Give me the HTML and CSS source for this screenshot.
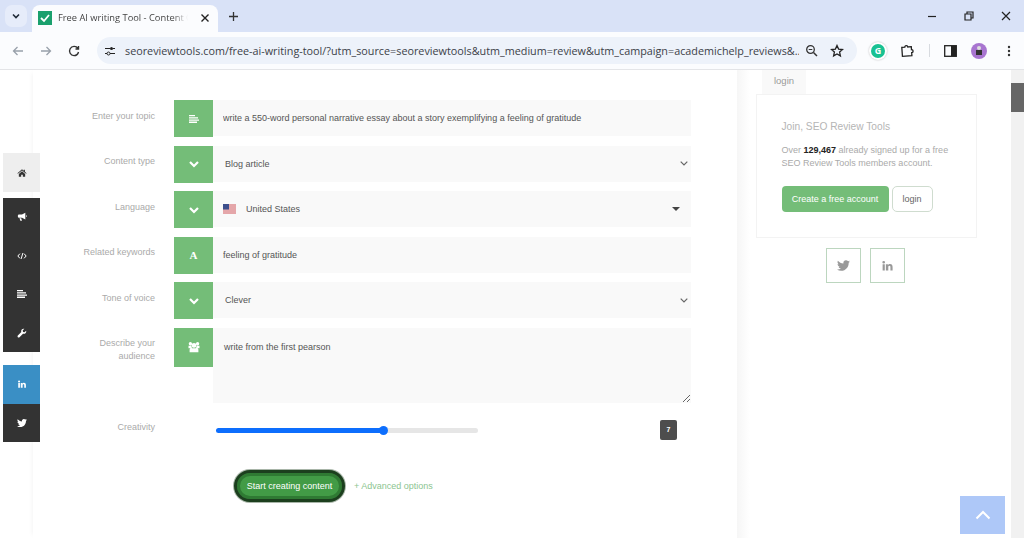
FILE: index.html
```html
<!DOCTYPE html>
<html lang="en">
<head>
<meta charset="utf-8">
<title>Free AI writing Tool - Content Creator</title>
<link rel="stylesheet" href="styles.css">
</head>
<body>
<svg class="defs" width="0" height="0" aria-hidden="true">
  <symbol id="i-lines" viewBox="0 0 10 8"><path d="M0 0h6v1.300H0zM0 2.200h9v1.300H0zM0 4.400h10v1.300H0zM0 6.600h8V8H0z" fill="currentColor"/></symbol>
  <symbol id="i-chev" viewBox="0 0 12 12"><path d="M2 4l4 4 4-4" fill="none" stroke="currentColor" stroke-width="2.2"/></symbol>
  <symbol id="i-users" viewBox="0 0 12 12"><path d="M2.400 1a1.700 1.700 0 110 3.400 1.700 1.700 0 010-3.400zM9.600 1a1.700 1.700 0 110 3.400 1.700 1.700 0 010-3.400zM6 2a2.400 2.400 0 110 4.800A2.400 2.400 0 016 2zM.5 4.800h2.800L4 7.200H.5zM8.700 4.800h2.800v2.400H8zM3 7.200h6c.8 0 1.400.7 1.400 1.500v2.600H1.600V8.700c0-.8.600-1.500 1.400-1.500z" fill="currentColor"/></symbol>
  <symbol id="i-home" viewBox="0 0 12 12"><path d="M6 1.500L.5 6.300l.6.7L6 2.900 10.900 7l.6-.7-2-1.700V2H8v1.400zM2.200 7.200L6 4l3.800 3.200v3.300H7V8H5v2.500H2.200z" fill="currentColor"/></symbol>
  <symbol id="i-horn" viewBox="0 0 12 12"><path d="M10 1v8L6 7H2.500C1.500 7 1 6.200 1 5.200V4.800C1 3.800 1.500 3 2.500 3H6zM3 7.500h2l1 3H4zM10.800 4h.7v2h-.7z" fill="currentColor"/></symbol>
  <symbol id="i-code" viewBox="0 0 12 12"><path d="M3.500 3.200L1 6l2.500 2.800M8.500 3.200L11 6 8.500 8.800M7 2.500L5 9.500" fill="none" stroke="currentColor" stroke-width="1.200"/></symbol>
  <symbol id="i-wrench" viewBox="0 0 12 12"><path d="M11 3.200L9 5.200 7.300 4.700 6.800 3 8.800 1C7.200.5 5.300 1.400 5 3.200c-.1.600 0 1.200.2 1.600L1 9c-.6.600-.6 1.400 0 2s1.400.6 2 0l4.200-4.200c1.900.7 4.500-.8 3.800-3.600z" fill="currentColor"/></symbol>
  <symbol id="i-in" viewBox="0 0 24 24"><path d="M4.980 3.500a2.500 2.500 0 11-.02 5 2.500 2.500 0 01.02-5zM3 9.500h4V21H3zM9 9.500h3.800v1.700h.05c.53-1 1.830-2.050 3.770-2.050 4.030 0 4.780 2.650 4.780 6.100V21h-4v-5.500c0-1.300-.02-3-1.830-3s-2.100 1.430-2.100 2.900V21H9z" fill="currentColor"/></symbol>
  <symbol id="i-tw" viewBox="0 0 24 24"><path d="M23.953 4.570a10 10 0 01-2.825.775 4.958 4.958 0 002.163-2.723c-.951.555-2.005.959-3.127 1.184a4.920 4.920 0 00-8.384 4.482C7.690 8.095 4.067 6.130 1.640 3.162a4.822 4.822 0 00-.666 2.475c0 1.710.870 3.213 2.188 4.096a4.904 4.904 0 01-2.228-.616v.060a4.923 4.923 0 003.946 4.827 4.996 4.996 0 01-2.212.085 4.936 4.936 0 004.604 3.417 9.867 9.867 0 01-6.102 2.105c-.390 0-.779-.023-1.170-.067a13.995 13.995 0 007.557 2.209c9.053 0 13.998-7.496 13.998-13.985 0-.210 0-.420-.015-.630A9.935 9.935 0 0024 4.590z" fill="currentColor"/></symbol>
</svg>

<header class="chrome">
  <div class="tabstrip">
    <button class="tab-list" aria-label="Search tabs"><svg width="10" height="10" viewBox="0 0 10 10"><path d="M2 3.500l3 3 3-3" fill="none" stroke="#1f2937" stroke-width="1.600"/></svg></button>
    <div class="tab">
      <svg class="favicon" width="14" height="14" viewBox="0 0 14 14"><rect width="14" height="14" fill="#1aa06d"/><path d="M3 7l3 3 5-6" fill="none" stroke="#fff" stroke-width="1.800"/></svg>
      <span class="tab-title">Free AI writing Tool - Content Creator</span>
      <svg width="10" height="10" viewBox="0 0 10 10"><path d="M1.500 1.500l7 7M8.500 1.500l-7 7" stroke="#222" stroke-width="1.400"/></svg>
    </div>
    <svg class="newtab" width="11" height="11" viewBox="0 0 11 11"><path d="M5.500 1v9M1 5.500h9" stroke="#333" stroke-width="1.300"/></svg>
    <div class="winctl">
      <svg width="10" height="10" viewBox="0 0 10 10"><path d="M1 5.500h8" stroke="#222" stroke-width="1.200"/></svg>
      <svg width="10" height="10" viewBox="0 0 10 10"><path d="M1 3h6v6H1zM3 3V1h6v6H7" fill="none" stroke="#222" stroke-width="1.200"/></svg>
      <svg width="10" height="10" viewBox="0 0 10 10"><path d="M1 1l8 8M9 1L1 9" stroke="#222" stroke-width="1.200"/></svg>
    </div>
  </div>
  <div class="toolbar">
    <svg class="nav-btn" width="12" height="12" viewBox="0 0 12 12"><path d="M11 6H1.500M5.500 2l-4 4 4 4" fill="none" stroke="#98a0aa" stroke-width="1.300"/></svg>
    <svg class="nav-btn" width="12" height="12" viewBox="0 0 12 12"><path d="M1 6h9.500M6.500 2l4 4-4 4" fill="none" stroke="#98a0aa" stroke-width="1.300"/></svg>
    <svg class="nav-btn" width="12" height="12" viewBox="0 0 12 12"><path d="M10 3.500A4.600 4.600 0 106 10.600 4.600 4.600 0 0010.500 7M10.500 1v3h-3" fill="none" stroke="#333" stroke-width="1.400"/></svg>
    <div class="omnibox">
      <svg class="tune" width="12" height="12" viewBox="0 0 12 12"><path d="M1 3.500h5M9 3.500h2M1 8.500h2M6 8.500h5" stroke="#222" stroke-width="1.200"/><circle cx="7.500" cy="3.500" r="1.500" fill="#222"/><circle cx="4.500" cy="8.500" r="1.500" fill="none" stroke="#222"/></svg>
      <span class="url">seoreviewtools.com/free-ai-writing-tool/?utm_source=seoreviewtools&amp;utm_medium=review&amp;utm_campaign=academichelp_reviews&amp;...</span>
      <svg width="13" height="13" viewBox="0 0 13 13"><circle cx="5.500" cy="5.500" r="3.800" fill="none" stroke="#333" stroke-width="1.300"/><path d="M8.500 8.500l3.500 3.500" stroke="#333" stroke-width="1.500"/><path d="M3.700 5.500h3.600" stroke="#333"/></svg>
      <svg class="star" width="14" height="14" viewBox="0 0 14 14"><path d="M7 1.500l1.600 3.600 3.900.4-2.900 2.600.8 3.800L7 10l-3.400 1.900.8-3.800L1.500 5.500l3.900-.4z" fill="none" stroke="#222" stroke-width="1.300"/></svg>
    </div>
    <div class="ext-g"><span class="ext-g-dot">G</span></div>
    <svg width="15" height="15" viewBox="0 0 15 15"><path d="M2 4h3a1.500 1.500 0 013 0h3.500v3a1.500 1.500 0 010 3V13H2z" fill="none" stroke="#222" stroke-width="1.300" transform="rotate(-4 7 7)"/></svg>
    <span class="tool-sep"></span>
    <svg width="13" height="12" viewBox="0 0 13 12"><rect x=".7" y=".7" width="11.600" height="10.600" fill="none" stroke="#222" stroke-width="1.300"/><rect x="7" y="1" width="5" height="10" fill="#222"/></svg>
    <span class="avatar"><svg width="8" height="9" viewBox="0 0 8 9"><circle cx="4" cy="2" r="2" fill="#ddd"/><rect x="1" y="4" width="6" height="5" fill="#333"/></svg></span>
    <svg width="4" height="12" viewBox="0 0 4 12"><circle cx="2" cy="2" r="1.200" fill="#333"/><circle cx="2" cy="6" r="1.200" fill="#333"/><circle cx="2" cy="10" r="1.200" fill="#333"/></svg>
  </div>
</header>

<div class="page">
  <nav class="sidenav" aria-label="Site">
    <a class="side-item side-home"><svg width="10" height="10"><use href="#i-home"/></svg></a>
    <div class="side-group side-dark">
      <a class="side-item"><svg width="10" height="10"><use href="#i-horn"/></svg></a>
      <a class="side-item"><svg width="10" height="10"><use href="#i-code"/></svg></a>
      <a class="side-item"><svg width="10" height="8"><use href="#i-lines"/></svg></a>
      <a class="side-item"><svg width="10" height="10"><use href="#i-wrench"/></svg></a>
    </div>
    <div class="side-group side-social">
      <a class="side-item side-li"><svg width="10" height="10"><use href="#i-in"/></svg></a>
      <a class="side-item side-tw"><svg width="10" height="10"><use href="#i-tw"/></svg></a>
    </div>
  </nav>

  <main class="main">
    <form class="form">
      <div class="row">
        <label class="label">Enter your topic</label>
        <span class="addon"><svg width="10" height="8"><use href="#i-lines"/></svg></span>
        <input class="field" type="text" value="write a 550-word personal narrative essay about a story exemplifying a feeling of gratitude">
      </div>
      <div class="row">
        <label class="label">Content type</label>
        <span class="addon"><svg width="12" height="12"><use href="#i-chev"/></svg></span>
        <select class="field select"><option>Blog article</option></select>
      </div>
      <div class="row">
        <label class="label">Language</label>
        <span class="addon"><svg width="12" height="12"><use href="#i-chev"/></svg></span>
        <div class="field lang">
          <svg class="flag" width="13" height="10" viewBox="0 0 13 10"><rect width="13" height="10" fill="#f0d9d9"/><path d="M0 1h13M0 3h13M0 5h13M0 7h13M0 9h13" stroke="#d9757a"/><rect width="6" height="5.500" fill="#3d4f8c"/></svg>
          <span class="lang-name">United States</span>
          <span class="caret"></span>
        </div>
      </div>
      <div class="row">
        <label class="label">Related keywords</label>
        <span class="addon addon-a">A</span>
        <input class="field" type="text" value="feeling of gratitude">
      </div>
      <div class="row">
        <label class="label">Tone of voice</label>
        <span class="addon"><svg width="12" height="12"><use href="#i-chev"/></svg></span>
        <select class="field select"><option>Clever</option></select>
      </div>
      <div class="row row-area">
        <label class="label label-wrap">Describe your audience</label>
        <span class="addon addon-tall"><svg width="12" height="12"><use href="#i-users"/></svg></span>
        <textarea class="field area">write from the first pearson</textarea>
      </div>
      <div class="row row-range">
        <label class="label">Creativity</label>
        <span class="range-spacer"></span>
        <div class="range-wrap">
          <input class="range" type="range" min="0" max="11" step="0.1" value="7.1">
          <output class="range-val">7</output>
        </div>
      </div>
      <div class="actions">
        <button class="start" type="button">Start creating content</button>
        <a class="advanced">+ Advanced options</a>
      </div>
    </form>
  </main>

  <aside class="aside">
    <div class="aside-tab">login</div>
    <section class="card">
      <h2 class="card-title">Join, SEO Review Tools</h2>
      <p class="card-text">Over <b>129,467</b> already signed up for a free SEO Review Tools members account.</p>
      <div class="card-btns">
        <a class="btn-create">Create a free account</a>
        <a class="btn-login">login</a>
      </div>
    </section>
    <div class="socials">
      <a class="social"><svg width="13" height="13"><use href="#i-tw"/></svg></a>
      <a class="social"><svg width="13" height="13"><use href="#i-in"/></svg></a>
    </div>
  </aside>

  <div class="scrollbar"><span class="thumb"></span></div>

  <a class="to-top" aria-label="Back to top"><svg width="16" height="10" viewBox="0 0 16 10"><path d="M1.500 8.500L8 2l6.500 6.500" fill="none" stroke="#fff" stroke-width="2"/></svg></a>
</div>
</body>
</html>
```

FILE: styles.css
```css
* { box-sizing: border-box; }

html, body {
  margin: 0;
  height: 538px;
  overflow: hidden;
  background: #fff;
  font-family: "Liberation Sans", Arial, sans-serif;
}

.defs { position: absolute; }

/* Browser chrome */
.chrome { height: 70px; font-family: "Open Sans", "Noto Sans", sans-serif; }

.tabstrip {
  height: 32px;
  background: #d9e2f7;
  display: flex;
  align-items: flex-end;
  padding-left: 5px;
}

.tab-list {
  width: 22px;
  height: 22px;
  margin-bottom: 5px;
  border: 0;
  border-radius: 7px;
  background: #e6ecfa;
  display: flex;
  align-items: center;
  justify-content: center;
  padding: 0;
}

.tab {
  width: 186px;
  height: 27px;
  margin-left: 5px;
  padding: 0 8px 2px 6px;
  background: #fbfcfe;
  border-radius: 8px 8px 0 0;
  display: flex;
  align-items: center;
  gap: 6px;
}

.favicon { flex: none; }

.tab-title {
  flex: 1;
  font-size: 9.300px;
  color: #444;
  white-space: nowrap;
  overflow: hidden;
  margin-right: 6px;
  -webkit-mask-image: linear-gradient(90deg, #000 88%, transparent);
  mask-image: linear-gradient(90deg, #000 88%, transparent);
}

.newtab { margin: 0 0 10px 10px; }

.winctl {
  margin-left: auto;
  margin-bottom: 11px;
  display: flex;
  gap: 27px;
  padding-right: 13px;
}

.toolbar {
  height: 38px;
  background: #fbfcfe;
  border-bottom: 1px solid #e3e4e7;
  display: flex;
  align-items: center;
  padding-left: 12px;
}

.nav-btn { margin-right: 16px; }
.nav-btn:nth-child(3) { margin-right: 17px; }

.omnibox {
  width: 760px;
  height: 27px;
  margin-right: 12px;
  background: #edf2fa;
  border-radius: 14px;
  display: flex;
  align-items: center;
  padding: 0 13px 0 7px;
  gap: 6px;
}

.tune { flex: none; margin-right: 3px; }

.url {
  flex: 1;
  font-size: 10.800px;
  color: #3c4148;
  white-space: nowrap;
  overflow: hidden;
}

.star { margin-left: 6px; }

.ext-g {
  width: 18px;
  height: 18px;
  border-radius: 50%;
  background: #fff;
  box-shadow: 0 0 2px #bbb;
  display: flex;
  align-items: center;
  justify-content: center;
  margin-right: 13px;
}

.ext-g-dot {
  width: 14px;
  height: 14px;
  border-radius: 50%;
  background: #19c192;
  color: #fff;
  font-size: 9px;
  font-weight: 700;
  line-height: 14px;
  text-align: center;
}

.tool-sep {
  width: 1px;
  height: 13px;
  background: #d8dbe0;
  margin: 0 14px;
}

.avatar {
  width: 16px;
  height: 16px;
  margin: 0 20px 0 14px;
  border-radius: 50%;
  background: #a875d0;
  display: flex;
  align-items: center;
  justify-content: center;
}

/* Page */
.page {
  position: relative;
  height: 468px;
  display: flex;
  padding-left: 33px;
  background: #fff;
}

.main {
  width: 704px;
  flex: none;
  padding-top: 30px;
  box-shadow: -3px 0 5px -3px #f0f0f0;
}

.row {
  display: grid;
  grid-template-columns: 122px 58px 478px;
  height: 36px;
  margin-bottom: 9.500px;
}

.label {
  font-size: 9px;
  line-height: 12.500px;
  color: #aaa;
  text-align: right;
  padding-top: 9.500px;
  width: 122px;
}

.label-wrap { padding-left: 50px; }

.addon {
  grid-column: 2;
  margin-left: 19px;
  width: 39px;
  height: 37px;
  background: #74bd78;
  color: #fff;
  display: flex;
  align-items: center;
  justify-content: center;
}

.addon-tall { height: 39px; }

.addon-a {
  font-family: "Liberation Serif", serif;
  font-weight: 700;
  font-size: 11px;
}

.field {
  width: 478px;
  height: 36px;
  border: 0;
  outline: 0;
  background: #f9f9f9;
  color: #555;
  font: 9px "Liberation Sans", Arial, sans-serif;
  padding: 0 10px;
}

.select {
  appearance: none;
  -webkit-appearance: none;
  padding-left: 12px;
  color: #555;
  background-color: #f9f9f9;
  background-image: url("data:image/svg+xml,%3Csvg xmlns='http://www.w3.org/2000/svg' width='8' height='5'%3E%3Cpath d='M.7.7L4 4l3.300-3.300' fill='none' stroke='%23666' stroke-width='1.200'/%3E%3C/svg%3E");
  background-repeat: no-repeat;
  background-position: right 3px center;
}

.lang {
  display: flex;
  align-items: center;
  padding-bottom: 1px;
}

.flag { margin-right: 10px; }

.caret {
  margin-left: auto;
  margin-right: 1px;
  border-style: solid;
  border-width: 4px 4px 0;
  border-color: #444 transparent transparent;
}

.row-area { height: 75px; margin-bottom: 0; }

.area {
  height: 75px;
  padding: 14px 11px;
  resize: vertical;
  display: block;
}

.row-range { margin-top: 18px; height: 18px; margin-bottom: 0; }
.row-range .label { padding-top: 0; }

.range-spacer { grid-column: 2; }

.range-wrap {
  display: flex;
  align-items: center;
  justify-content: space-between;
  height: 20px;
  margin-top: -1px;
  padding-right: 14px;
}

.range {
  -webkit-appearance: none;
  appearance: none;
  width: 262px;
  height: 9px;
  margin: 2px 0 0 3px;
  background: transparent;
}

.range::-webkit-slider-runnable-track {
  height: 5px;
  border-radius: 3px;
  background: linear-gradient(90deg, #0d6efd 64%, #e6e6e6 64%);
}

.range::-webkit-slider-thumb {
  -webkit-appearance: none;
  width: 9px;
  height: 9px;
  margin-top: -2px;
  border-radius: 50%;
  background: #0d6efd;
}

.range-val {
  width: 17px;
  height: 20px;
  border-radius: 2px;
  background: #4d4d4d;
  color: #fff;
  font-size: 7px;
  font-weight: 700;
  line-height: 20px;
  text-align: center;
}

.actions {
  display: flex;
  align-items: center;
  margin: 31px 0 0 201px;
  gap: 9px;
}

.start {
  width: 111px;
  height: 32px;
  border: 3px solid #1c3f1e;
  border-radius: 16px;
  background: #429b46;
  box-shadow: inset 0 0 0 3px #2f7a33, 0 0 0 1px #a8b5a8;
  color: #fff;
  font: 9px "Liberation Sans", Arial, sans-serif;
  padding: 0;
}

.advanced {
  font-size: 9px;
  color: #8cc590;
}

/* Aside */
.aside {
  width: 274px;
  flex: none;
  padding-left: 19px;
  background: linear-gradient(90deg, #f6f6f6, #fff 13px);
}

.aside-tab {
  width: 44px;
  height: 24px;
  margin-left: 6px;
  background: #f9f9f9;
  font-size: 9.500px;
  line-height: 22px;
  color: #999;
  text-align: center;
}

.card {
  width: 221px;
  height: 144px;
  background: #fff;
  border: 1px solid #f3f3f3;
  padding: 25px 24.500px 0;
}

.card-title {
  margin: 0 0 11px;
  font-size: 10.200px;
  font-weight: 400;
  line-height: 13px;
  color: #b5b5b5;
}

.card-text {
  margin: 0 0 16px;
  font-size: 9px;
  line-height: 13px;
  color: #aaa;
}

.card-text b { color: #222; }

.card-btns { display: flex; gap: 3px; }

.btn-create {
  width: 107px;
  height: 26px;
  border-radius: 4px;
  background: #74bd78;
  color: #fff;
  font-size: 9px;
  line-height: 26px;
  text-align: center;
}

.btn-login {
  width: 41px;
  height: 26px;
  border: 1px solid #cfdccf;
  border-radius: 5px;
  color: #666;
  font-size: 9px;
  line-height: 24px;
  text-align: center;
}

.socials {
  display: flex;
  justify-content: center;
  gap: 9px;
  margin-top: 10px;
  width: 171px;
  margin-left: 24px;
}

.social {
  width: 35px;
  height: 35px;
  border: 1px solid #bcd6bf;
  color: #999;
  display: flex;
  align-items: center;
  justify-content: center;
}

.scrollbar {
  width: 13px;
  flex: none;
  background: #f1f1f1;
  padding-top: 13px;
}

.thumb {
  display: block;
  height: 29px;
  background: #666;
}

/* Overlays */
.sidenav {
  position: absolute;
  left: 3px;
  top: 83px;
  width: 37px;
  color: #fff;
}

.side-item {
  display: flex;
  align-items: center;
  justify-content: center;
  height: 38.500px;
}

.side-home { height: 39px; background: #eee; color: #333; margin-bottom: 6px; }
.side-dark { background: #333; margin-bottom: 13px; }
.side-li { background: #3a8fc5; }
.side-tw { background: #333; }

.to-top {
  position: absolute;
  right: 19px;
  top: 426px;
  width: 45px;
  height: 38px;
  background: #aec8f8;
  display: flex;
  align-items: center;
  justify-content: center;
}
```
